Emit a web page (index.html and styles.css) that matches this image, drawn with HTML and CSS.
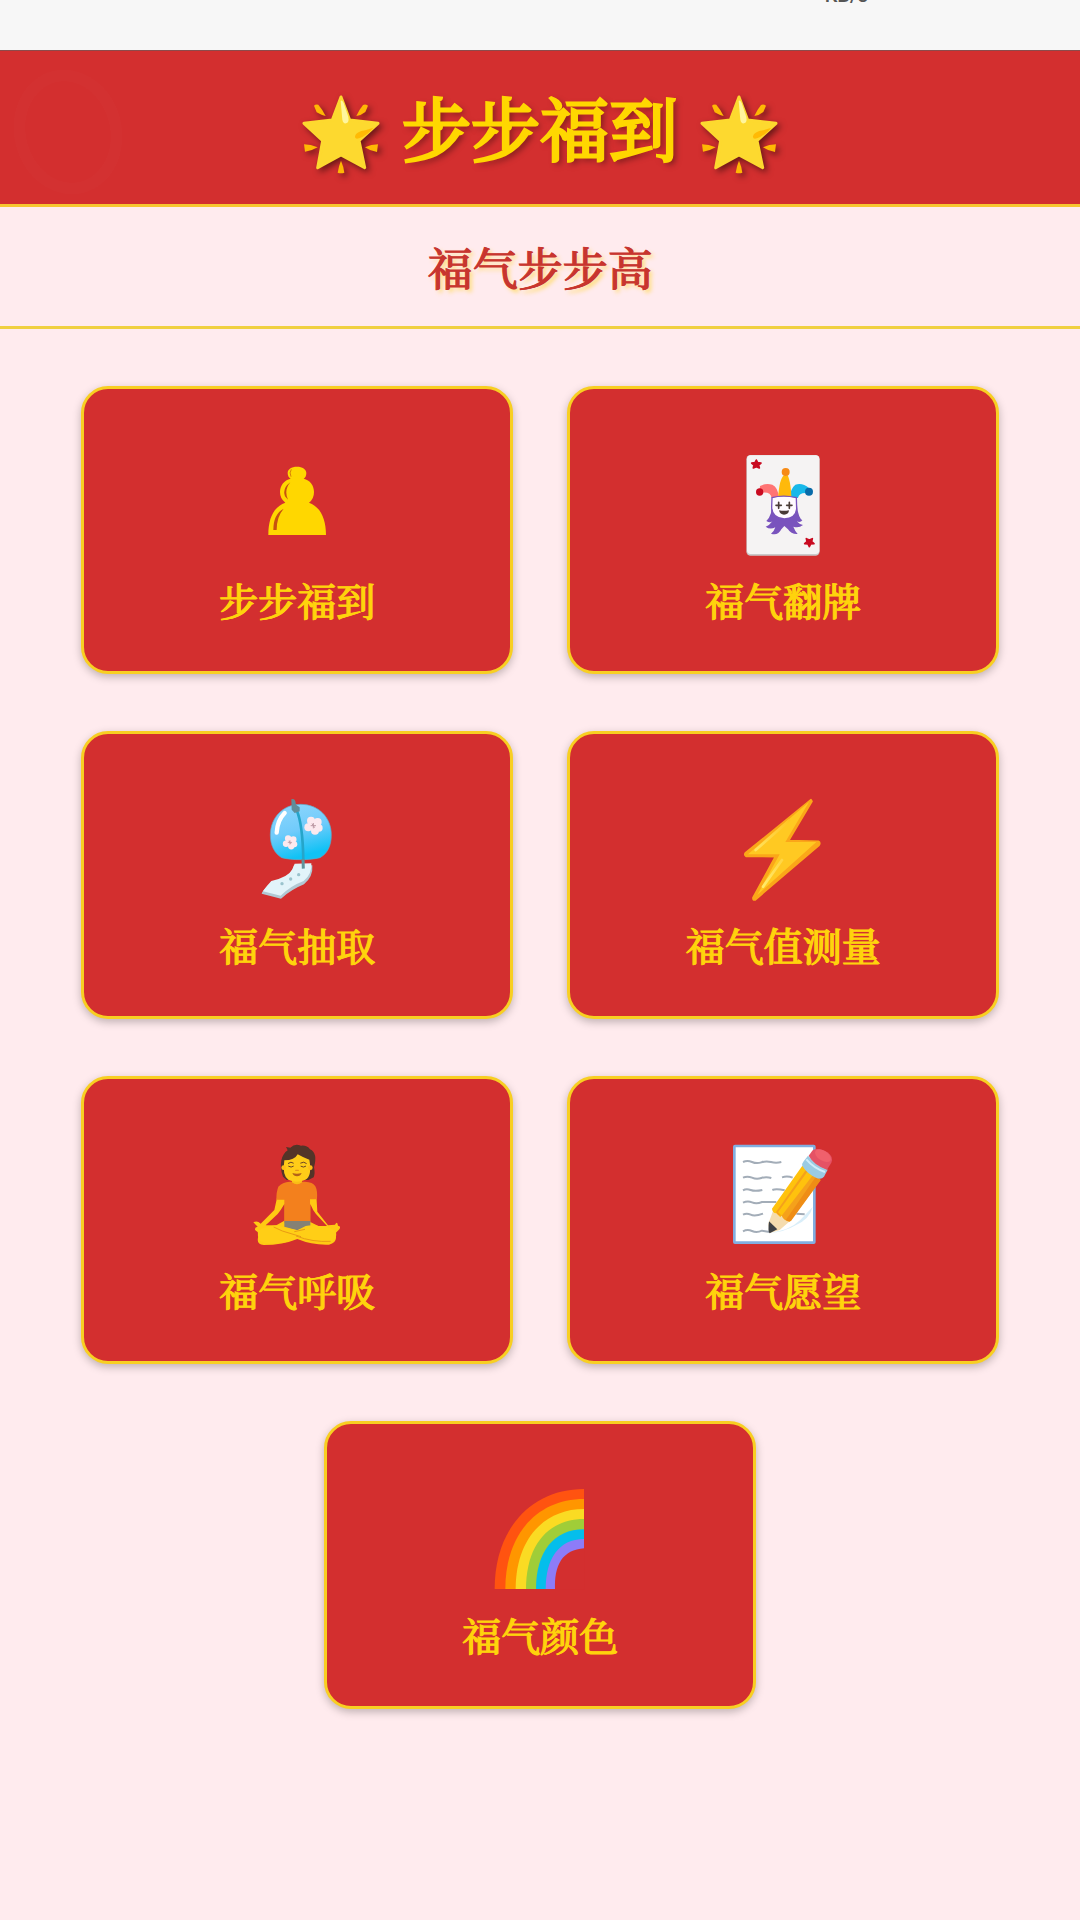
FILE: index.html
```
<!DOCTYPE html>
<html lang="zh-CN">
<head>
  <meta charset="UTF-8">
  <meta name="viewport" content="width=device-width, initial-scale=1.0">
  <title>步步福到</title>
  <link rel="stylesheet" href="styles.css">
</head>
<body>
  <div class="status-bar"><span class="speed">KB/s</span></div>

  <header class="header">
    <svg class="symbols">
      <symbol id="star" viewBox="24 36 258 258">
        <g fill="#ffb804">
          <path d="M72 77Q76 72 85 74Q97 88 107 108Q93 105 80 97Z"/>
          <path d="M234 77Q226 71 219 75Q207 90 199 108Q215 105 226 96Z"/>
          <path d="M42 193Q62 193 83 202Q65 213 45 215Z"/>
          <path d="M264 193Q243 193 225 202Q240 213 261 216Z"/>
          <path d="M153 242Q161 260 163 278Q153 282 143 278Q146 258 153 242Z"/>
        </g>
        <path fill="#fdd92f" stroke="#fdd92f" stroke-width="9" stroke-linejoin="round" d="M153 51L179 120L264 130L207 182L224 263L153 225L83 263L98 182L42 130L127 120Z"/>
        <path fill="#fff59d" d="M152 63Q156 58 161 69L175 111Q178 128 168 130Q160 132 157 119Z"/>
        <path fill="#ffba05" d="M250 143Q232 166 207 175Q194 179 195 169Q198 155 226 151Z"/>
      </symbol>
    </svg>
    <h1 class="title">
      <svg class="star"><use href="#star"/></svg>
      <span class="title-text">步步福到</span>
      <svg class="star"><use href="#star"/></svg>
    </h1>
  </header>

  <h2 class="slogan">福气步步高</h2>

  <main class="menu">
    <button class="card">
      <svg class="icon" viewBox="555 249 312 312">
        <path fill="#ffd700" d="M711 290C727 290 739 298 739 309Q739 321 731 326C750 330 762 346 762 366Q762 387 747 398C780 410 798 444 798 495H625C625 444 641 411 676 398Q660 386 660 366C660 346 672 331 692 326Q683 321 683 309C683 298 694 290 711 290Z"/>
        <path fill="none" stroke="#c7530f" stroke-width="2" d="M694 298Q687 308 693 320"/>
        <path fill="#c7530f" d="M691 337Q666 355 675 379L684 389Q671 361 691 337ZM671 416Q640 432 640 480H650Q650 440 671 416Z"/>
      </svg>
      <span>步步福到</span>
    </button>

    <button class="card">
      <svg class="icon" viewBox="33 69 312 312">
        <rect x="79" y="75" width="220" height="302" rx="13" fill="#c9c9c9"/>
        <rect x="81" y="76" width="217" height="296" rx="11" fill="#f5f3f3"/>
        <path id="pip" fill="#c90a20" stroke="#c90a20" stroke-width="5" stroke-linejoin="round" d="M109 90L113 98L123 99L116 105L118 114L109 110L100 114L102 105L95 99L105 98Z"/>
        <use href="#pip" transform="rotate(180 188.500 220)"/>
        <path fill="#ff7474" d="M120 168Q138 158 157 164Q174 171 177 204H155Q151 182 118 190Z"/>
        <path fill="#18b8e9" d="M267 174Q247 157 226 164Q211 176 209 204H234Q238 185 267 190Z"/>
        <path fill="#ffb90b" d="M174 204C177 169 181 145 192 136H203C210 151 214 181 214 204Z"/>
        <circle cx="119" cy="186" r="11" fill="#c90a20"/>
        <circle cx="197" cy="126" r="12" fill="#f78b16"/>
        <circle cx="267" cy="185" r="12" fill="#086ba9"/>
        <path fill="#7953bd" d="M155 225L153 249Q148 265 139 273Q150 280 157 274Q149 286 137 290Q150 300 166 292Q163 303 153 311Q174 318 184 298L193 288L204 298Q213 313 233 312Q225 303 220 290Q236 296 249 285Q238 283 230 274Q241 279 247 271Q234 262 231 225Z"/>
        <path fill="#fffaff" stroke="#7953bd" stroke-width="4" d="M156 203Q190 194 229 203L230 237Q227 265 193 267Q156 264 155 232Z"/>
        <path stroke="#493a36" stroke-width="5" stroke-linecap="round" d="M176 217V235M168 226H184M208 217V235M200 226H216"/>
        <path fill="#493a36" d="M177 241Q192 244 207 241Q206 254 192 254Q180 254 177 241Z"/>
      </svg>
      <span>福气翻牌</span>
    </button>

    <button class="card">
      <svg class="icon" viewBox="15 54 312 312">
        <defs>
          <linearGradient id="glass" x1="0" y1="0" x2=".3" y2="1">
            <stop offset="0" stop-color="#91d7fc"/>
            <stop offset=".55" stop-color="#70cbfb"/>
            <stop offset="1" stop-color="#10c2f5"/>
          </linearGradient>
        </defs>
        <path fill="url(#glass)" stroke="#64a6c3" stroke-width="2" d="M182 73C235 73 274 112 274 165C274 200 260 222 240 233C210 241 155 241 125 233C103 220 91 195 91 165C91 112 130 73 182 73Z"/>
        <path fill="none" stroke="#fff" stroke-width="13" stroke-linecap="round" d="M134 99Q112 121 110 158"/>
        <g id="flower" fill="#fce9ee">
          <circle cx="213" cy="122" r="12"/><circle cx="233" cy="126" r="12"/>
          <circle cx="237" cy="144" r="11"/><circle cx="225" cy="152" r="12"/>
          <circle cx="205" cy="142" r="12"/><circle cx="220" cy="137" r="12"/>
          <path stroke="#bc99a4" stroke-width="3" d="M220 129V145M212 137H228M216 131L224 143"/>
        </g>
        <use href="#flower" transform="translate(-24 79) scale(.79)"/>
        <path fill="#b1c9d4" d="M162 256H217Q220 290 192 313Q153 329 123 356L65 341Q65 333 94 308Q154 295 162 256Z"/>
        <path fill="#e2f4fa" d="M164 251L214 250Q217 282 191 303Q151 318 122 347L69 334Q73 326 94 303Q145 292 157 268Z"/>
        <g fill="#9ac3cd"><circle cx="126" cy="311" r="5"/><circle cx="152" cy="297" r="5"/><circle cx="176" cy="284" r="5"/></g>
        <path fill="none" stroke="#25a5ca" stroke-width="8" d="M170 91Q188 132 190 240"/>
        <path fill="none" stroke="#5f939b" stroke-width="9" d="M189 237L190 266"/>
        <path fill="#608d99" d="M154 58Q163 54 166 64L168 74L179 82V94L164 99L155 89Z"/>
      </svg>
      <span>福气抽取</span>
    </button>

    <button class="card">
      <svg class="icon" viewBox="33 54 312 312">
        <defs>
          <linearGradient id="shine" x1="0" y1="1" x2="1" y2="0">
            <stop offset="0" stop-color="#ffef76"/><stop offset="1" stop-color="#ffc422"/>
          </linearGradient>
        </defs>
        <path fill="#fba719" stroke="#fba719" stroke-width="5" stroke-linejoin="round" d="M273 59L276 64L206 182L296 184Q302 188 297 196L105 360Q98 361 99 353L166 230L78 229Q72 225 76 219Z"/>
        <path fill="#ffc922" d="M267 66L196 186H289L112 345L179 223H84Z"/>
        <path fill="none" stroke="url(#shine)" stroke-width="8" stroke-linecap="round" d="M208 121L107 210M186 240L129 320"/>
      </svg>
      <span>福气值测量</span>
    </button>

    <button class="card">
      <svg class="icon" viewBox="30 39 312 312">
        <path fill="#543428" d="M144 140C131 105 139 73 158 61L153 51L166 53Q179 40 198 47Q216 45 225 58Q249 69 237 112Q241 130 236 142L220 150H155Z"/>
        <path fill="#ffca13" d="M127 199L118 240L77 281Q67 271 55 277L68 290Q57 292 61 301Q71 306 72 315Q60 342 86 345Q143 345 187 327Q233 346 282 344Q311 335 300 311L313 298Q319 288 309 287Q307 271 300 284L279 286L247 245L244 195Z"/>
        <path fill="#f3801d" d="M130 170Q142 157 164 155H210Q234 156 241 169Q248 182 246 208H225L226 278H148V209H124Q124 185 130 170Z"/>
        <path fill="#d32f2f" d="M148 222V272L124 286H92L128 252Q138 240 148 222ZM226 222V276L250 288H276L243 252Q233 240 226 222Z"/>
        <path fill="#858175" d="M148 273H226V290L187 301L148 290Z"/>
        <path fill="#ffce16" d="M70 301Q94 289 125 286L150 293L187 301L212 288Q232 284 252 288Q291 292 303 305Q307 327 291 334Q256 343 211 328L187 324Q158 341 104 341Q61 339 70 301Z"/>
        <path fill="none" stroke="#e99b14" stroke-width="3" d="M116 291L142 303L198 320M178 305L210 298M183 318Q233 337 287 334"/>
        <path fill="#f9bd16" d="M171 142H201V157Q186 169 171 157Z"/>
        <path fill="#ffcc18" d="M148 91Q179 91 188 73Q207 84 223 89Q232 139 211 149Q186 161 160 149Q141 137 148 91Z"/>
        <circle cx="146" cy="113" r="7" fill="#ffbd17"/><circle cx="226" cy="113" r="7" fill="#ffbd17"/>
        <path fill="none" stroke="#6a4326" stroke-width="3" stroke-linecap="round" d="M160 100Q168 93 175 99M197 99Q207 93 214 100M161 109Q169 114 175 109M198 109Q206 114 212 109"/>
        <path fill="#b36218" d="M172 129Q186 134 200 129Q196 139 186 139Q176 139 172 129Z"/>
        <path stroke="#e39618" stroke-width="4" stroke-linecap="round" d="M182 121H190"/>
      </svg>
      <span>福气呼吸</span>
    </button>

    <button class="card">
      <svg class="icon" viewBox="33 39 312 312">
        <rect x="43" y="48" width="240" height="290" rx="2" fill="#fff" stroke="#82aee0" stroke-width="8"/>
        <path fill="#d9eef9" d="M148 309Q208 302 240 271L278 231Q269 267 227 286Q192 307 148 309Z"/>
        <path fill="none" stroke="#a3adb8" stroke-width="6" d="M69 96Q82 90 96 96T124 97T153 96T184 96M69 143Q82 137 96 143T124 144T154 144M186 142Q202 137 218 143M69 181Q79 175 92 180T127 180M157 180Q168 175 194 181M69 218Q83 211 96 217T126 216H169M69 254Q80 248 92 254T129 251M69 304Q82 297 96 303T126 302L149 306M229 251L254 253"/>
        <path fill="#f5dcae" d="M159 243L145 281L149 309L179 300L211 272Z"/>
        <path fill="#3e4044" d="M147 274L172 298L149 310Q143 307 147 274Z"/>
        <path fill="#ffc20d" d="M247 107L156 236Q157 248 169 250L181 262L274 128Z"/>
        <path fill="#f5a11b" d="M258 119L168 246Q174 258 185 257Q191 272 209 275L302 149Z"/>
        <path fill="#ffc20d" d="M263 124L174 247L185 257L279 135Z"/>
        <path fill="#ef8d15" d="M287 141L198 269Q203 276 213 273L302 151Z"/>
        <path fill="#9bcbe3" d="M264 77Q286 102 323 119L312 140Q303 151 288 143Q262 132 247 108Q245 101 251 94Z"/>
        <path fill="none" stroke="#d0edfa" stroke-width="6" d="M259 88Q281 114 315 126"/>
        <path fill="#e55265" d="M266 77L278 61Q294 51 322 67Q342 82 334 98L321 119Q281 105 266 77Z"/>
        <ellipse cx="309" cy="77" rx="27" ry="15" transform="rotate(33 309 77)" fill="#f0606c"/>
      </svg>
      <span>福气愿望</span>
    </button>

    <button class="card">
      <svg class="icon" viewBox="54 54 312 312">
        <path fill="#ff5310" d="M74 357C74 175 185 57 342 57V357Z"/>
        <path fill="#ff9600" d="M106 357C106 193 201 87 342 87V357Z"/>
        <path fill="#fadb23" d="M137 357C137 209 221 117 342 117V357Z"/>
        <path fill="#a0cd38" d="M168 357C168 225 235 147 342 147V357Z"/>
        <path fill="#05beeb" d="M198 357C198 247 250 178 342 178V357Z"/>
        <path fill="#8d7cf8" d="M227 357C227 267 266 207 342 207V357Z"/>
        <path fill="#d32f2f" d="M255 358C252 285 278 239 343 235V358Z"/>
      </svg>
      <span>福气颜色</span>
    </button>
  </main>
</body>
</html>
```

FILE: styles.css
```
* {
  margin: 0;
  padding: 0;
  box-sizing: border-box;
}

body {
  background-color: #ffebee;
  font-family: "Noto Serif CJK SC", "Liberation Serif", "Noto Sans CJK SC", serif;
  min-height: 100vh;
}

.status-bar {
  height: 51px;
  background-color: #f7f7f7;
  border-bottom: 1px solid #8c4b4b;
  overflow: hidden;
}

.speed {
  display: block;
  margin-top: -15px;
  padding-right: 212px;
  text-align: right;
  font-family: Roboto, sans-serif;
  font-size: 20px;
  font-weight: 500;
  line-height: 20px;
  color: #555;
}

.header {
  position: relative;
  background-color: #d32f2f;
  border-bottom: 3px solid #f7c730;
  padding: 29px 0 26px;
}

/* faint ring in the corner of the banner */
.header::before {
  content: "";
  position: absolute;
  left: 14px;
  top: 18px;
  width: 84px;
  height: 102px;
  border: 12px solid rgba(255, 255, 255, 0.01);
  border-radius: 50%;
  transform: rotate(-14deg);
}

.symbols {
  display: none;
}

.title {
  display: flex;
  justify-content: center;
  align-items: center;
  gap: 18px;
  color: #ffd700;
  font-size: 69px;
  font-weight: normal;
  -webkit-text-stroke: 3px #ffd700;
  line-height: 94px;
  text-shadow: 3px 3px 6px rgba(0, 0, 0, 0.5);
}

.title-text {
  padding-bottom: 4px;
}

.star {
  width: 86px;
  height: 86px;
  margin-top: 12px;
  filter: drop-shadow(3px 3px 3px rgba(0, 0, 0, 0.5));
}

.slogan {
  padding: 27px 0;
  border-bottom: 3px solid #f0d040;
  text-align: center;
  color: #c8352e;
  font-size: 45px;
  font-weight: normal;
  -webkit-text-stroke: 1px #c8352e;
  line-height: 65px;
  text-shadow: 1px 0 0 #c8352e, 3px 3px 4px rgba(255, 215, 60, 0.8);
}

.menu {
  display: flex;
  flex-wrap: wrap;
  justify-content: center;
  gap: 57px 5%;
  padding: 57px 0;
}

.card {
  width: 40%;
  display: flex;
  flex-direction: column;
  align-items: center;
  gap: 16px;
  padding: 64px 0 45px;
  background-color: #d32f2f;
  border: 3px solid #f8cf22;
  border-radius: 27px;
  box-shadow: 0 3px 8px rgba(0, 0, 0, 0.25);
  color: #ffd30c;
  font-family: inherit;
  font-size: 39px;
  font-weight: normal;
  -webkit-text-stroke: 1px #ffd30c;
  line-height: 53px;
  text-shadow: 1px 0 0 #ffd30c;
  cursor: pointer;
}

.icon {
  width: 104px;
  height: 104px;
}
```
